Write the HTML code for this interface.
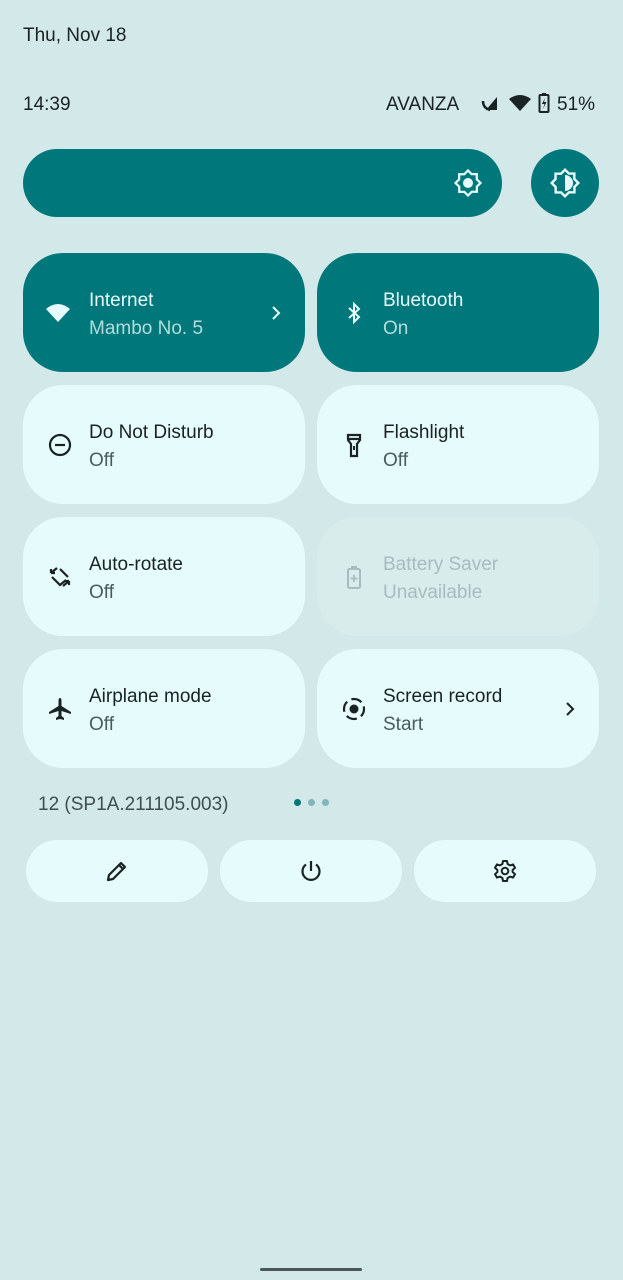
<!DOCTYPE html>
<html><head><meta charset="utf-8"><style>
*{margin:0;padding:0;box-sizing:border-box}
body{width:623px;height:1280px;background:#d3e8e9;font-family:"Liberation Sans",sans-serif;position:relative;overflow:hidden;color:#1a2223}
.abs{position:absolute}
.tile{position:absolute;width:282px;height:119px;border-radius:40px;background:#e6fcfc}
.tile.on{background:#00777a;color:#e6fcfc}
.tile.dis{background:#d9ecec;color:#a9bcbd}
.t1{position:absolute;left:66px;top:37px;font-size:19px}
.t2{position:absolute;left:66px;top:65px;font-size:19px;color:#4a5b5c}
.on .t2{color:#b3dddd}
.dis .t2,.dis .t1{color:#a9bcbd}
.ic{position:absolute;left:24px;top:47px;width:26px;height:26px}
.chev{position:absolute;right:24px;top:52px}
.btn{position:absolute;top:840px;width:182px;height:62px;border-radius:31px;background:#e6fcfc}
.btn svg{position:absolute;left:79px;top:19px}
</style></head><body>
<div class="abs" style="left:23px;top:25px;font-size:19px">Thu, Nov 18</div>
<div class="abs" style="left:23px;top:94px;font-size:19px">14:39</div>
<div class="abs" style="left:386px;top:94px;font-size:19px">AVANZA</div>
<svg class="abs" style="left:480px;top:94px" width="20" height="20" viewBox="0 0 20 20"><path d="M17 3 L17 16 L6 16 Z" fill="#1a2223"/><path d="M3 7 q0 7 7 9" stroke="#1a2223" stroke-width="2.5" fill="none"/></svg>
<svg class="abs" style="left:508px;top:94px" width="24" height="18" viewBox="0 0 24 18"><path d="M1 5 Q12 -3 23 5 L12 17 Z" fill="#1a2223"/></svg>
<svg class="abs" style="left:538px;top:92px" width="12" height="22" viewBox="0 0 12 22"><rect x="1.5" y="3" width="9" height="17" rx="1" fill="none" stroke="#1a2223" stroke-width="2"/><rect x="4" y="1" width="4" height="2" fill="#1a2223"/><path d="M7 6 L4 12 H6.5 L5 17 L8.5 10 H6 Z" fill="#1a2223"/></svg>
<div class="abs" style="left:557px;top:94px;font-size:19px">51%</div>

<div class="abs" style="left:23px;top:149px;width:479px;height:68px;border-radius:34px;background:#00777a"></div>
<svg class="abs" style="left:453px;top:168px" width="30" height="30" viewBox="0 0 24 24"><path d="M12 2 l2.9 2.9 h4.1 v4.1 L22 12 l-2.9 2.9 v4.1 h-4.1 L12 22 l-2.9-2.9 H5 v-4.1 L2 12 l2.9-2.9 V5 h4.1 Z" fill="none" stroke="#e6fcfc" stroke-width="1.8"/><circle cx="12" cy="12" r="4" fill="#e6fcfc"/></svg>
<div class="abs" style="left:531px;top:149px;width:68px;height:68px;border-radius:34px;background:#00777a"></div>
<svg class="abs" style="left:549px;top:167px" width="32" height="32" viewBox="0 0 24 24"><path d="M12 2 l2.9 2.9 h4.1 v4.1 L22 12 l-2.9 2.9 v4.1 h-4.1 L12 22 l-2.9-2.9 H5 v-4.1 L2 12 l2.9-2.9 V5 h4.1 Z" fill="none" stroke="#e6fcfc" stroke-width="1.8"/><path d="M12 6 a6 6 0 0 1 0 12 Z" fill="#e6fcfc"/></svg>

<div class="tile on" style="left:23px;top:253px"><svg class="ic" viewBox="0 0 26 26" style="left:22px"><path d="M1 9 Q13 -1 25 9 L13 22 Z" fill="#e6fcfc"/></svg><div class="t1">Internet</div><div class="t2">Mambo No. 5</div><svg class="chev" width="10" height="16" viewBox="0 0 10 16"><path d="M2 2 L8 8 L2 14" stroke="#e6fcfc" stroke-width="2" fill="none"/></svg></div>
<div class="tile on" style="left:317px;top:253px"><svg class="ic" viewBox="0 0 26 26"><path d="M8 8 L18 17 L13 22 V4 L18 9 L8 18" stroke="#e6fcfc" stroke-width="2" fill="none"/></svg><div class="t1">Bluetooth</div><div class="t2">On</div></div>

<div class="tile" style="left:23px;top:385px"><svg class="ic" viewBox="0 0 26 26"><circle cx="13" cy="13" r="10" stroke="#1a2223" stroke-width="2.2" fill="none"/><path d="M8 13 H18" stroke="#1a2223" stroke-width="2.2"/></svg><div class="t1">Do Not Disturb</div><div class="t2">Off</div></div>
<div class="tile" style="left:317px;top:385px"><svg class="ic" viewBox="0 0 26 26"><path d="M7 3 H19 V8 L16 12 V24 H10 V12 L7 8 Z M7 7 H19" stroke="#1a2223" stroke-width="2.2" fill="none"/><rect x="12" y="14" width="2" height="4" fill="#1a2223"/></svg><div class="t1">Flashlight</div><div class="t2">Off</div></div>

<div class="tile" style="left:23px;top:517px"><svg class="ic" viewBox="0 0 26 26"><path d="M4 9 L10 4 M4 9 V5 M4 9 H8 M5 13 L13 21 L19 16 M22 17 L16 22 M22 17 V21 M22 17 H18 M21 13 L13 5" stroke="#1a2223" stroke-width="2.2" fill="none"/></svg><div class="t1">Auto-rotate</div><div class="t2">Off</div></div>
<div class="tile dis" style="left:317px;top:517px"><svg class="ic" viewBox="0 0 26 26"><rect x="7" y="5" width="12" height="19" rx="1.5" stroke="#a9bcbd" stroke-width="2" fill="none"/><rect x="10" y="2" width="6" height="3" fill="#a9bcbd"/><path d="M13 11 V18 M9.5 14.5 H16.5" stroke="#a9bcbd" stroke-width="1.8"/></svg><div class="t1">Battery Saver</div><div class="t2">Unavailable</div></div>

<div class="tile" style="left:23px;top:649px"><svg class="ic" viewBox="0 0 26 26"><path d="M13 2 Q14.5 2 14.5 5 V10 L24 16 V18 L14.5 15 V20 L17 22 V24 L13 23 L9 24 V22 L11.5 20 V15 L2 18 V16 L11.5 10 V5 Q11.5 2 13 2 Z" fill="#1a2223"/></svg><div class="t1">Airplane mode</div><div class="t2">Off</div></div>
<div class="tile" style="left:317px;top:649px"><svg class="ic" viewBox="0 0 26 26"><circle cx="13" cy="13" r="10" stroke="#1a2223" stroke-width="2.2" fill="none" stroke-dasharray="11 4.7" stroke-dashoffset="3"/><circle cx="13" cy="13" r="4.5" fill="#1a2223"/></svg><div class="t1">Screen record</div><div class="t2">Start</div><svg class="chev" width="10" height="16" viewBox="0 0 10 16"><path d="M2 2 L8 8 L2 14" stroke="#1a2223" stroke-width="2" fill="none"/></svg></div>

<div class="abs" style="left:38px;top:794px;font-size:19px;color:#3f4f50">12 (SP1A.211105.003)</div>
<div class="abs" style="left:294px;top:799px;width:7px;height:7px;border-radius:50%;background:#00777a"></div>
<div class="abs" style="left:308px;top:799px;width:7px;height:7px;border-radius:50%;background:#80b7b8"></div>
<div class="abs" style="left:322px;top:799px;width:7px;height:7px;border-radius:50%;background:#80b7b8"></div>

<div class="btn" style="left:26px"><svg width="24" height="24" viewBox="0 0 24 24"><path d="M3 21 L4 16 L16 4 L20 8 L8 20 Z M14 6 L18 10" stroke="#1a2223" stroke-width="2.2" fill="none" stroke-linejoin="round"/></svg></div>
<div class="btn" style="left:220px"><svg width="24" height="24" viewBox="0 0 24 24"><path d="M12 2 V12 M7 5.5 A8.5 8.5 0 1 0 17 5.5" stroke="#1a2223" stroke-width="2.2" fill="none"/></svg></div>
<div class="btn" style="left:414px"><svg width="24" height="24" viewBox="0 0 24 24"><path d="M10 2 H14 L14.6 5 L17 6.4 L20 5.4 L22 8.8 L19.6 11 V13 L22 15.2 L20 18.6 L17 17.6 L14.6 19 L14 22 H10 L9.4 19 L7 17.6 L4 18.6 L2 15.2 L4.4 13 V11 L2 8.8 L4 5.4 L7 6.4 L9.4 5 Z" stroke="#1a2223" stroke-width="2" fill="none" stroke-linejoin="round"/><circle cx="12" cy="12" r="3.3" stroke="#1a2223" stroke-width="2" fill="none"/></svg></div>

<div class="abs" style="left:260px;top:1268px;width:102px;height:3px;border-radius:2px;background:#4a5556"></div>
</body></html>
